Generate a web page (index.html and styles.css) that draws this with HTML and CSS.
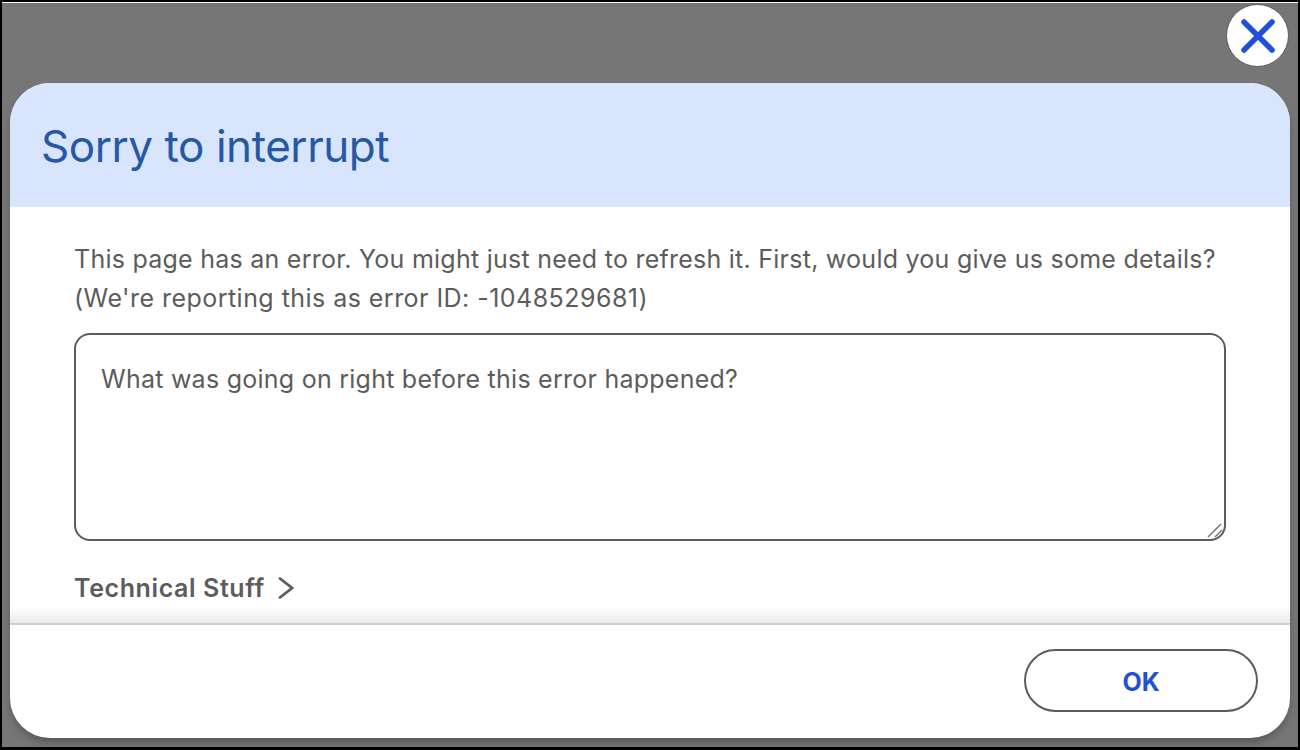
FILE: index.html
```html
<!DOCTYPE html>
<html lang="en">
<head>
<meta charset="utf-8">
<title>Sorry to interrupt</title>
<link rel="stylesheet" href="styles.css">
</head>
<body>
<div class="screen">
  <button class="close" aria-label="Close">
    <svg class="close-icon" viewBox="0 0 34 34" width="34" height="34"><path d="M3 3 L31 31 M31 3 L3 31"/></svg>
  </button>
  <section class="modal">
    <header class="modal-head"><h1 class="title">Sorry to interrupt</h1></header>
    <div class="modal-body">
      <p class="message">This page has an error. You might just need to refresh it. First, would you give us some details?<br><span class="message-id">(We're reporting this as error ID: -1048529681)</span></p>
      <div class="details-wrap">
        <textarea class="details" placeholder="What was going on right before this error happened?"></textarea>
        <svg class="grip" viewBox="0 0 16 15" width="16" height="15"><path d="M1 14 L14 1 M8 14 L15 7"/></svg>
      </div>
      <div class="tech"><span>Technical Stuff</span>
        <svg class="chev" viewBox="0 0 16 24" width="16" height="24"><path d="M2 2.5 L14 12 L2 21.5"/></svg>
      </div>
    </div>
    <footer class="modal-foot"><button class="ok">OK</button></footer>
  </section>
</div>
</body>
</html>
```
FILE: styles.css
```css
* { box-sizing: border-box; }
html, body { margin: 0; height: 100%; background: #000; }
body { width: 1300px; height: 750px; overflow: hidden; font-family: Inter, "Liberation Sans", sans-serif; }
.screen {
  position: relative;
  width: 1300px;
  height: 750px;
  background: #767676;
  border-style: solid;
  border-color: #000;
  border-width: 2px 2px 3px 2px;
  padding: 81px 8px 9px 8px;
}
.screen::before {
  content: "";
  position: absolute;
  left: 0; right: 0; top: 0;
  height: 1px;
  background: #fff;
}
.close {
  position: absolute;
  left: 1224px;
  top: 2px;
  width: 63px;
  height: 63px;
  border-radius: 50%;
  background: #fff;
  border: 1px solid #5c5c5c;
  padding: 0;
  display: flex;
  align-items: center;
  justify-content: center;
}
.close-icon path { fill: none; stroke: #1f50d6; stroke-width: 5.5; stroke-linecap: round; }
.modal {
  height: 655px;
  background: #fff;
  border-radius: 40px;
  display: flex;
  flex-direction: column;
  overflow: hidden;
  box-shadow: 0 6px 10px -2px rgba(0, 0, 0, 0.28);
}
.modal-head {
  height: 124px;
  background: #d8e5fd;
  padding: 2px 32px 0 31px;
  display: flex;
  align-items: center;
  flex: none;
}
.title { margin: 0; font-size: 44px; font-weight: 400; color: #2559a6; letter-spacing: -0.45px; }
.modal-body {
  flex: 1;
  padding: 33px 64px 0 64px;
  background: linear-gradient(to bottom, #fff calc(100% - 16px), #ececec calc(100% - 1px));
}
.message { margin: 0; font-size: 25px; line-height: 39px; letter-spacing: 0.25px; color: #5c5c5c; white-space: nowrap; }
.message-id { letter-spacing: 0.46px; }
.details-wrap { position: relative; width: 1152px; margin-top: 15px; }
.details {
  display: block;
  width: 100%;
  height: 208px;
  border: 2px solid #5c5c5c;
  border-radius: 16px;
  padding: 25px 25px;
  font: 25px/39px Inter, "Liberation Sans", sans-serif;
  letter-spacing: 0.25px;
  color: #5c5c5c;
  outline: none;
  resize: none;
}
.details::placeholder { color: #5c5c5c; opacity: 1; }
.grip { position: absolute; right: 3px; bottom: 3px; }
.grip path { fill: none; stroke: #6e6e6e; stroke-width: 1.4; }
.tech {
  margin-top: 32px;
  display: flex;
  align-items: center;
  gap: 13px;
  font-size: 25px;
  font-weight: 600;
  letter-spacing: 0.6px;
  color: #5c5c5c;
}
.chev path { fill: none; stroke: #5c5c5c; stroke-width: 2.8; stroke-linecap: round; }
.modal-foot {
  flex: none;
  height: 115px;
  border-top: 2px solid #cdcdcd;
  padding: 24px 32px 0 0;
  display: flex;
  justify-content: flex-end;
  align-items: flex-start;
}
.ok {
  width: 234px;
  height: 63px;
  padding: 2px 0 0;
  border: 2px solid #5c5c5c;
  border-radius: 32px;
  background: #fff;
  color: #1f50d6;
  font: 700 25px Inter, "Liberation Sans", sans-serif;
}
```
